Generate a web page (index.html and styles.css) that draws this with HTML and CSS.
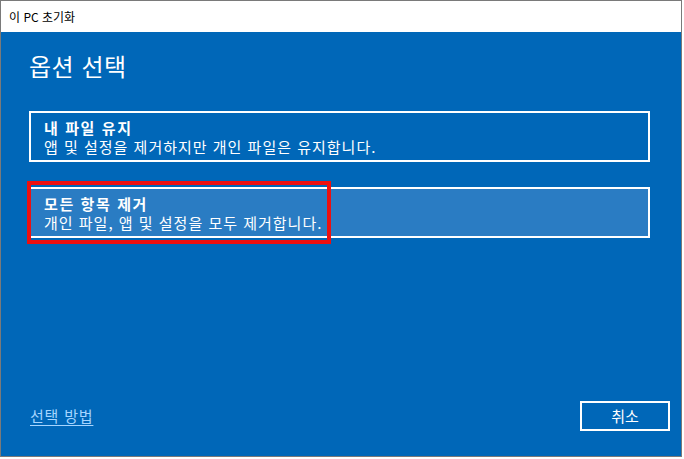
FILE: index.html
```html
<!DOCTYPE html>
<html lang="ko">
<head>
<meta charset="utf-8">
<title>이 PC 초기화</title>
<link rel="stylesheet" href="styles.css">
</head>
<body>
<div class="window">
  <div class="titlebar">이 PC 초기화</div>
  <div class="main">
    <div class="content">
      <h1 class="heading">옵션 선택</h1>
      <div class="option">
        <div class="opt-title">내 파일 유지</div>
        <div class="opt-desc">앱 및 설정을 제거하지만 개인 파일은 유지합니다.</div>
      </div>
      <div class="option selected">
        <div class="opt-title">모든 항목 제거</div>
        <div class="opt-desc">개인 파일, 앱 및 설정을 모두 제거합니다.</div>
        <div class="highlight"></div>
      </div>
    </div>
    <div class="footer">
      <a class="link" href="#">선택 방법</a>
      <button class="cancel">취소</button>
    </div>
  </div>
</div>
</body>
</html>
```

FILE: styles.css
```css
* { box-sizing: border-box; }
html, body {
  margin: 0;
  padding: 0;
  background: #ffffff;
}
body {
  font-family: "Noto Sans CJK KR", "Noto Sans", sans-serif;
  width: 684px;
  height: 459px;
  overflow: hidden;
}
.window {
  width: 682px;
  height: 457px;
  border: 1px solid #7a7a7a;
  display: flex;
  flex-direction: column;
}
.titlebar {
  height: 31px;
  background: #ffffff;
  color: #000000;
  font-size: 12px;
  line-height: 31px;
  padding-left: 8px;
}
.main {
  flex: 1;
  background: #0067b8;
  display: flex;
  flex-direction: column;
  color: #ffffff;
}
.content {
  padding: 18px 31px 0 28px;
}
.heading {
  margin: 0 0 29px 0;
  font-size: 24px;
  font-weight: 400;
  line-height: 32px;
  letter-spacing: 0.5px;
}
.option {
  position: relative;
  height: 51px;
  border: 2px solid #ffffff;
  padding: 5px 13px 4px 13px;
  margin-bottom: 25px;
  font-size: 15px;
  line-height: 19px;
}
.option.selected {
  background: #2a7cc3;
}
.opt-title {
  font-weight: 700;
  letter-spacing: 1.6px;
}
.opt-desc {
  letter-spacing: 1px;
}
.highlight {
  position: absolute;
  left: -4px;
  top: -8px;
  width: 304px;
  height: 63px;
  border: 4px solid #ec1010;
}
.footer {
  margin-top: auto;
  display: flex;
  align-items: center;
  justify-content: space-between;
  padding: 0 11px 25px 29px;
}
.link {
  color: #a6d5ff;
  font-size: 15px;
  line-height: 20px;
  letter-spacing: 0.8px;
  text-decoration: underline;
  text-underline-offset: 3px;
}
.cancel {
  width: 90px;
  height: 30px;
  background: transparent;
  border: 2px solid #ffffff;
  color: #ffffff;
  font-family: "Noto Sans CJK KR", "Noto Sans", sans-serif;
  font-size: 15px;
  line-height: 20px;
  padding: 0;
}
```
